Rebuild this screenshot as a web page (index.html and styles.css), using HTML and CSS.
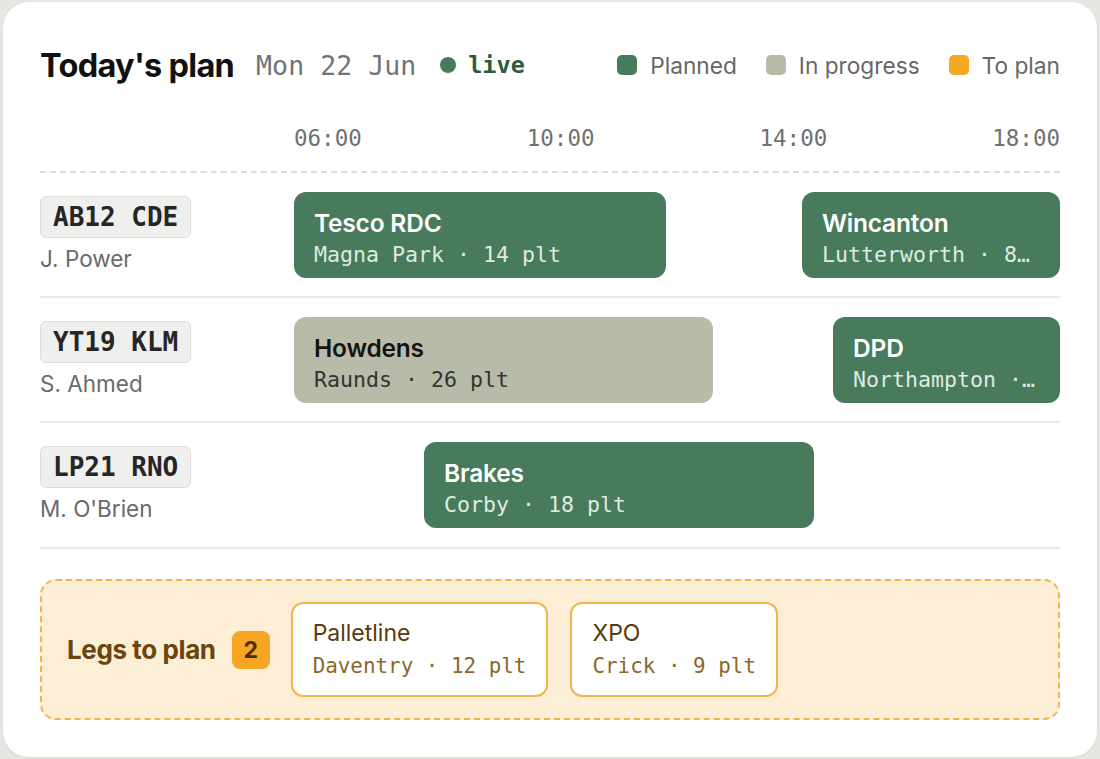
FILE: index.html
```html
<!DOCTYPE html>
<html lang="en">
<head>
<meta charset="utf-8">
<title>Today's plan</title>
<link rel="stylesheet" href="styles.css">
</head>
<body>
<main class="card">
  <header class="head">
    <h1 class="title">Today's plan</h1>
    <span class="date">Mon 22 Jun</span>
    <span class="live"><span class="live-dot"></span>live</span>
    <ul class="legend">
      <li><span class="sw sw-planned"></span>Planned</li>
      <li><span class="sw sw-progress"></span>In progress</li>
      <li><span class="sw sw-toplan"></span>To plan</li>
    </ul>
  </header>

  <div class="axis">
    <div class="axis-spacer"></div>
    <div class="axis-labels">
      <span>06:00</span><span>10:00</span><span>14:00</span><span>18:00</span>
    </div>
  </div>

  <section class="rows">
    <div class="row">
      <div class="who">
        <span class="plate">AB12 CDE</span>
        <span class="driver">J. Power</span>
      </div>
      <div class="track">
        <div class="leg leg-planned" style="left:0%;width:48.56%">
          <span class="leg-title">Tesco RDC</span>
          <span class="leg-sub">Magna Park · 14 plt</span>
        </div>
        <div class="leg leg-planned" style="left:66.32%;width:33.68%">
          <span class="leg-title">Wincanton</span>
          <span class="leg-sub">Lutterworth · 8 plt</span>
        </div>
      </div>
    </div>
    <div class="row">
      <div class="who">
        <span class="plate">YT19 KLM</span>
        <span class="driver">S. Ahmed</span>
      </div>
      <div class="track">
        <div class="leg leg-progress" style="left:0%;width:54.7%">
          <span class="leg-title">Howdens</span>
          <span class="leg-sub">Raunds · 26 plt</span>
        </div>
        <div class="leg leg-planned" style="left:70.37%;width:29.63%">
          <span class="leg-title">DPD</span>
          <span class="leg-sub">Northampton · 11 plt</span>
        </div>
      </div>
    </div>
    <div class="row">
      <div class="who">
        <span class="plate">LP21 RNO</span>
        <span class="driver">M. O'Brien</span>
      </div>
      <div class="track">
        <div class="leg leg-planned" style="left:16.97%;width:50.91%">
          <span class="leg-title">Brakes</span>
          <span class="leg-sub">Corby · 18 plt</span>
        </div>
      </div>
    </div>
  </section>

  <section class="toplan">
    <span class="toplan-label">Legs to plan</span>
    <span class="badge">2</span>
    <div class="pending">
      <span class="pending-title">Palletline</span>
      <span class="pending-sub">Daventry · 12 plt</span>
    </div>
    <div class="pending">
      <span class="pending-title">XPO</span>
      <span class="pending-sub">Crick · 9 plt</span>
    </div>
  </section>
</main>
</body>
</html>
```

FILE: styles.css
```css
* { box-sizing: border-box; }

html, body {
  margin: 0;
  padding: 0;
  background: #e6e6e2;
}

body {
  font-family: Inter, "Noto Sans", sans-serif;
  color: #111;
  height: 759px;
  overflow: hidden;
}

.card {
  margin: 2px 3px 0 3px;
  height: 755px;
  background: #fff;
  border-radius: 26px;
  box-shadow: 0 1px 3px rgba(0,0,0,0.06);
  padding: 43px 37px 30px 37px;
  display: flex;
  flex-direction: column;
}

.card > * { flex: none; }

/* header */
.head {
  display: flex;
  align-items: center;
  height: 40px;
}

.title {
  margin: 0;
  font-size: 32.5px;
  font-weight: 700;
  letter-spacing: -0.7px;
  color: #111;
}

.date {
  font-family: "DejaVu Sans Mono", "Liberation Mono", monospace;
  font-size: 26.6px;
  color: #737373;
  margin-left: 22px;
}

.live {
  display: flex;
  align-items: center;
  margin-left: 24px;
  font-family: "DejaVu Sans Mono", "Liberation Mono", monospace;
  font-weight: 700;
  font-size: 23.5px;
  color: #2c5c3c;
}

.live-dot {
  width: 16px;
  height: 16px;
  border-radius: 50%;
  background: #477b5c;
  margin-right: 12px;
}

.legend {
  list-style: none;
  margin: 0 0 0 auto;
  padding: 0;
  display: flex;
  align-items: center;
  gap: 29px;
  font-size: 22.7px;
  color: #676767;
}

.legend li {
  display: flex;
  align-items: center;
  gap: 13px;
}

.sw {
  width: 20px;
  height: 20px;
  border-radius: 5px;
  display: inline-block;
}
.sw-planned { background: #477b5c; }
.sw-progress { background: #b9bba9; }
.sw-toplan { background: #f6a823; }

/* axis */
.axis {
  display: flex;
  margin-top: 39px;
  padding-bottom: 19px;
  border-bottom: 2px dashed #dcdcdc;
}

.axis-spacer { width: 254px; flex: none; }

.axis-labels {
  flex: 1;
  display: flex;
  justify-content: space-between;
  font-family: "DejaVu Sans Mono", "Liberation Mono", monospace;
  font-size: 22.5px;
  color: #707070;
  line-height: 28px;
}

/* rows */
.row {
  display: flex;
  align-items: center;
  padding: 19px 0 18px 0;
  border-bottom: 2px solid #e9e9e7;
}

.row:last-child { padding-bottom: 19px; }

.who {
  width: 254px;
  flex: none;
  display: flex;
  flex-direction: column;
  align-items: flex-start;
  gap: 6px;
}

.plate {
  font-family: "DejaVu Sans Mono", "Liberation Mono", monospace;
  font-weight: 700;
  font-size: 26px;
  line-height: 40px;
  padding: 0 12px;
  background: #efefed;
  border: 1px solid #dddddb;
  border-radius: 6px;
  color: #262626;
}

.driver {
  font-size: 22.5px;
  color: #6a6a6a;
  line-height: 30px;
}

.track {
  position: relative;
  flex: 1;
  height: 86px;
}

.leg {
  position: absolute;
  top: 0;
  height: 86px;
  border-radius: 12px;
  padding: 8px 20px 0 20px;
  display: flex;
  flex-direction: column;
  justify-content: center;
  overflow: hidden;
}

.leg-planned { background: #477b5c; color: #fff; }
.leg-progress { background: #b9bba9; color: #141414; }

.leg-title {
  font-size: 24.5px;
  font-weight: 600;
  line-height: 31px;
  letter-spacing: -0.2px;
  white-space: nowrap;
}

.leg-sub {
  font-family: "DejaVu Sans Mono", "Liberation Mono", monospace;
  font-size: 21.6px;
  line-height: 31px;
  white-space: nowrap;
  overflow: hidden;
  text-overflow: ellipsis;
}

.leg-planned .leg-sub { color: #dfeae3; }
.leg-progress .leg-sub { color: #333; }

/* to plan */
.toplan {
  margin-top: 30px;
  height: 141px;
  background: #fdefd5;
  border: 2px dashed #efb64c;
  border-radius: 16px;
  display: flex;
  align-items: center;
  padding: 0 25px;
}

.toplan-label {
  font-size: 26px;
  font-weight: 700;
  color: #6b4510;
  letter-spacing: -0.4px;
}

.badge {
  margin-left: 16px;
  width: 38px;
  height: 38px;
  border-radius: 8px;
  background: #f6a623;
  color: #4a2f06;
  font-weight: 700;
  font-size: 23px;
  display: flex;
  align-items: center;
  justify-content: center;
}

.pending {
  margin-left: 21px;
  height: 95px;
  background: #fff;
  border: 2px solid #efb64c;
  border-radius: 12px;
  padding: 0 20px;
  display: flex;
  flex-direction: column;
  justify-content: center;
  gap: 3px;
}

.pending + .pending { margin-left: 22px; }

.pending-title {
  font-size: 23px;
  color: #5a3b08;
  line-height: 30px;
}

.pending-sub {
  font-family: "DejaVu Sans Mono", "Liberation Mono", monospace;
  font-size: 20.9px;
  color: #8a682a;
  line-height: 30px;
}
```
